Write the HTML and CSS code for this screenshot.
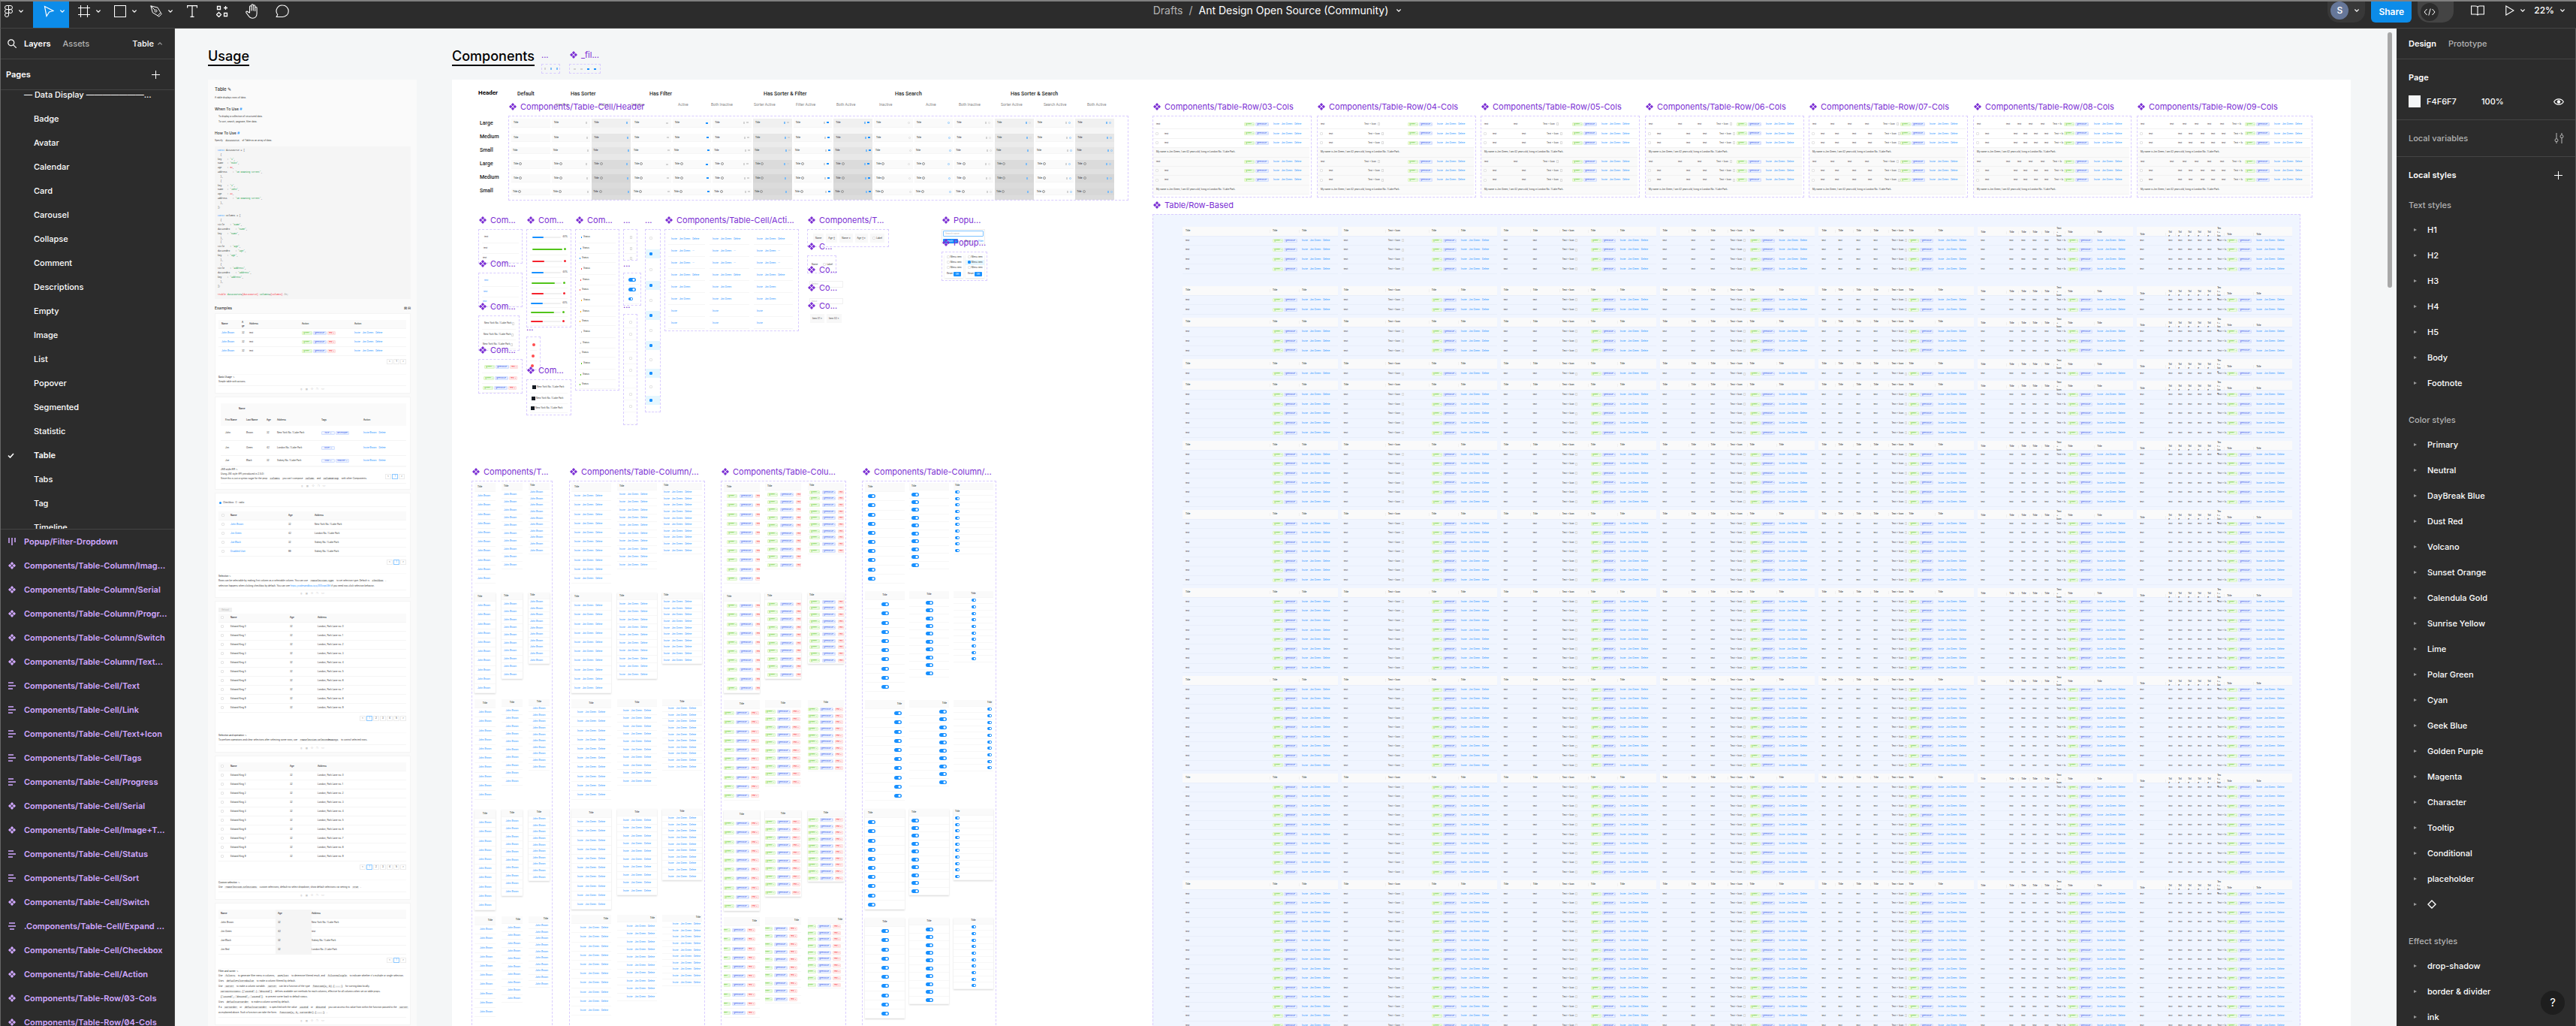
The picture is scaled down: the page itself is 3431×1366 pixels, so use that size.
FILE: index.html
```html
<!DOCTYPE html>
<html lang="en">
<head>
<meta charset="utf-8">
<title>Ant Design Open Source (Community)</title>
<link rel="stylesheet" href="styles.css">
</head>
<body>
<svg class="defs" aria-hidden="true">
  <symbol id="i-comp" viewBox="0 0 10 10"><path fill="currentColor" d="M5 0 7.2 2.2 5 4.4 2.8 2.2zM5 5.6 7.2 7.8 5 10 2.8 7.8zM2.2 2.8 4.4 5 2.2 7.2 0 5zM7.8 2.8 10 5 7.8 7.2 5.6 5z"/></symbol>
  <symbol id="i-lines" viewBox="0 0 10 10"><path fill="none" stroke="currentColor" stroke-width="1.5" d="M0 1h7M0 5h10M0 9h6"/></symbol>
  <symbol id="i-center" viewBox="0 0 10 10"><path fill="none" stroke="currentColor" stroke-width="1.5" d="M1 1h8M0 5h10M2 9h6"/></symbol>
  <symbol id="i-bars" viewBox="0 0 10 10"><path fill="none" stroke="currentColor" stroke-width="1.5" d="M1 0v7M5 0v10M9 0v6"/></symbol>
  <symbol id="i-chev" viewBox="0 0 6 4"><path fill="none" stroke="currentColor" stroke-width="1.1" d="M.4.5 3 3.2 5.6.5"/></symbol>
</svg>

<header class="toolbar">
  <div class="tools">
    <button class="tool tool--menu" aria-label="Main menu"><svg width="11" height="16" viewBox="0 0 11 16"><path fill="none" stroke="#fff" d="M5.5.5H3a2.5 2.5 0 0 0 0 5h2.5zM5.5.5H8a2.5 2.5 0 0 1 0 5H5.5zM5.5 5.5H3a2.5 2.5 0 0 0 0 5h2.5zM5.5 10.5H3a2.5 2.5 0 1 0 2.5 2.5z"/><circle cx="8" cy="8" r="2.5" fill="none" stroke="#fff"/></svg><svg class="chev"><use href="#i-chev"/></svg></button>
    <button class="tool tool--active" aria-label="Move"><svg width="14" height="16" viewBox="0 0 14 16"><path fill="none" stroke="#fff" stroke-width="1.2" d="M1.5 1.5 13 7.5 7.5 9 4 14.5z"/></svg><svg class="chev"><use href="#i-chev"/></svg></button>
    <button class="tool" aria-label="Frame"><svg width="16" height="16" viewBox="0 0 16 16"><path fill="none" stroke="#fff" stroke-width="1.1" d="M3.5 0v16M12.5 0v16M0 3.5h16M0 12.5h16"/></svg><svg class="chev"><use href="#i-chev"/></svg></button>
    <button class="tool" aria-label="Rectangle"><svg width="16" height="16" viewBox="0 0 16 16"><path fill="none" stroke="#fff" stroke-width="1.1" d="M.5.5h15v15H.5z"/></svg><svg class="chev"><use href="#i-chev"/></svg></button>
    <button class="tool" aria-label="Pen"><svg width="16" height="16" viewBox="0 0 16 16"><g fill="none" stroke="#fff"><path d="m.8.8 2.5 9 6.7 4 4-4-4-6.7zM.8.8 6.5 6.5M10 13.8l1.5 1.5 3.8-3.8-1.5-1.5"/><circle cx="7.5" cy="7.5" r="1.5"/></g></svg><svg class="chev"><use href="#i-chev"/></svg></button>
    <button class="tool tool--wide" aria-label="Text"><svg width="14" height="16" viewBox="0 0 14 16"><path fill="none" stroke="#fff" stroke-width="1.2" d="M.6 3.5V.6h12.8v2.9M7 .6v14.8M4.5 15.4h5"/></svg></button>
    <button class="tool tool--wide" aria-label="Resources"><svg width="16" height="16" viewBox="0 0 16 16"><path fill="none" stroke="#fff" stroke-width="1.3" d="M1.5 1.5h4v4h-4zM10.5 10.5h4v4h-4zM12.5 1v5M10 3.5h5M3.5 9.5l3 3-3 3-3-3z"/></svg></button>
    <button class="tool tool--wide" aria-label="Hand"><svg width="18" height="20" viewBox="0 0 18 20"><path fill="none" stroke="#fff" stroke-width="1.1" stroke-linejoin="round" d="M5.5 12V4a1.2 1.2 0 0 1 2.4 0v5V2a1.2 1.2 0 0 1 2.4 0v7V3a1.2 1.2 0 0 1 2.4 0v6.5V5.5a1.2 1.2 0 0 1 2.4 0V13c0 4-2.5 6.2-5.5 6.2-3.2 0-4.5-1.2-6-3.7L1 12c-.8-1.5 1-2.5 2.1-1.3z"/></svg></button>
    <button class="tool tool--wide" aria-label="Comment"><svg width="18" height="18" viewBox="0 0 18 18"><path fill="none" stroke="#fff" stroke-width="1.1" d="M9.5 1a7.7 7.7 0 1 1 0 15.5H1.2l1.6-3A7.7 7.7 0 0 1 9.5 1z"/></svg></button>
  </div>
  <div class="crumbs"><span class="crumbs__dim">Drafts</span><span class="crumbs__dim">/</span><span>Ant Design Open Source (Community)</span><svg class="chev"><use href="#i-chev"/></svg></div>
  <div class="actions">
    <button class="user" aria-label="Account"><span class="user__face">S</span><svg class="chev"><use href="#i-chev"/></svg></button>
    <button class="share">Share</button>
    <button class="dev" aria-label="Dev mode"><span class="dev__knob"><svg width="16" height="10" viewBox="0 0 16 10"><path fill="none" stroke="#fff" d="M4.5 1 1 5l3.5 4M11.5 1 15 5l-3.5 4M9.2.5 6.8 9.5"/></svg></span></button>
    <button class="plain plain--book" aria-label="Libraries"><svg width="18" height="14" viewBox="0 0 18 14"><path fill="none" stroke="#fff" stroke-width="1.1" d="M9 3C9 1.5 7.5 1 6 1H.6v11H6.5C8 12 9 12.3 9 13.5 9 12.3 10 12 11.5 12h5.9V1H12C10.5 1 9 1.5 9 3zv10"/></svg></button>
    <button class="plain" aria-label="Present"><svg width="12" height="14" viewBox="0 0 12 14"><path fill="none" stroke="#fff" stroke-width="1.1" d="M.8 1v12L11 7z"/></svg><svg class="chev"><use href="#i-chev"/></svg></button>
    <button class="plain zoom">22%<svg class="chev"><use href="#i-chev"/></svg></button>
  </div>
</header>

<main class="work">
  <aside class="side">
    <nav class="tabs">
      <svg class="tabs__find" width="12" height="12" viewBox="0 0 12 12"><g fill="none" stroke="#fff" stroke-width="1.2"><circle cx="4.8" cy="4.8" r="4"/><path d="m7.8 7.8 4 4"/></g></svg>
      <button class="tab tab--on">Layers</button><button class="tab">Assets</button>
      <button class="tab tab--page">Table<svg class="chev chev--up"><use href="#i-chev"/></svg></button>
    </nav>
    <div class="bar"><h2>Pages</h2><button class="add" aria-label="Add page"></button></div>
    <ul class="pages" id="pages"></ul>
    <ul class="layers" id="layers"></ul>
  </aside>

  <section class="canvas" id="canvas"><div class="scroll"></div></section>

  <aside class="props">
    <nav class="tabs tabs--props"><button class="tab tab--on">Design</button><button class="tab">Prototype</button></nav>
    <section class="prop prop--page">
      <h2>Page</h2>
      <div class="fill"><span class="fill__chip"></span><span class="fill__hex">F4F6F7</span><span>100%</span>
        <svg class="end" width="14" height="9" viewBox="0 0 14 9"><path fill="none" stroke="#fff" stroke-width="1.2" d="M.7 4.5C3.5-.3 10.5-.3 13.3 4.5 10.5 9.3 3.5 9.3.7 4.5z"/><circle cx="7" cy="4.5" r="2.2" fill="#fff"/></svg></div>
    </section>
    <section class="prop prop--line"><span class="dim">Local variables</span>
      <svg class="end" width="13" height="14" viewBox="0 0 13 14"><g fill="none" stroke="#bbb"><path d="M3 0v7.5M3 12v2M10 0v2.5M10 7v7"/><circle cx="3" cy="9.7" r="2"/><circle cx="10" cy="4.6" r="2"/></g></svg></section>
    <section class="prop prop--styles">
      <div class="prop__head"><h2>Local styles</h2><button class="add" aria-label="Add style"></button></div>
      <div id="styles"></div>
    </section>
    <button class="help" aria-label="Help">?</button>
  </aside>
</main>
<script src="app.js"></script>
</body>
</html>
```
FILE: styles.css
```css
* { box-sizing: border-box; }
body { margin: 0; height: 100vh; overflow: hidden; display: grid; grid-template-rows: 38px 1fr; background: #2c2c2c; color: #fff; font: 500 11px/16px Inter, "Liberation Sans", sans-serif; }
button { all: unset; box-sizing: border-box; cursor: default; }
h1, h2, ul, p { margin: 0; padding: 0; font: inherit; }
ul { list-style: none; }
.defs { position: absolute; width: 0; height: 0; }
.chev { width: 6px; height: 4px; flex: none; color: #fff; }
.chev--up { transform: rotate(180deg); color: #999; }

/* toolbar */
.toolbar { display: grid; grid-template-columns: 1fr auto 1fr; align-items: start; border-top: 2px solid #808080; border-bottom: 1px solid #444; border-left: 1px solid #666; position: relative; z-index: 2; }
.tools, .actions { display: flex; }
.tool { width: 48px; height: 35px; display: flex; align-items: center; justify-content: flex-end; gap: 8px; padding: 0 6px 10px 0; }
.tool--menu { width: 43px; padding-right: 13px; }
.tool--active { background: #0c8ce9; }
.tool--wide { justify-content: center; width: 40px; padding-right: 0; }
.crumbs { display: flex; align-items: center; gap: 8px; height: 24px; padding-right: 30px; font-size: 14px; font-weight: 400; }
.crumbs__dim { color: #b3b3b3; }
.crumbs .chev { margin-left: 3px; }
.actions { justify-content: flex-end; align-items: center; height: 28px; padding: 0 15px 0 0; }
.actions > * { height: 28px; }
.user { display: flex; align-items: center; gap: 8px; width: 50px; padding: 0 0 4px 4px; background: #383838; border-radius: 0 0 15px 15px; margin-right: 8px; }
.user__face { width: 24px; height: 24px; border-radius: 50%; background: #667799; text-align: center; line-height: 24px; font-size: 12px; }
.share { width: 54px; background: #0c8ce9; border-radius: 0 0 6px 6px; text-align: center; line-height: 24px; font-size: 12px; font-weight: 600; margin-right: 8px; }
.dev { width: 48px; background: #444; border-radius: 0 0 15px 15px; padding: 0 4px; }
.dev__knob { display: grid; place-items: center; width: 24px; height: 24px; border-radius: 50%; background: #2c2c2c; }
.plain { display: flex; align-items: center; gap: 8px; padding: 0 0 4px; margin-left: 18px; }
.plain--book { margin: 0 10px 0 23px; }
.zoom { font-size: 12px; margin-left: 12px; }

.work { display: grid; grid-template-columns: 233px minmax(0, 1fr) 239px; min-height: 0; }

/* left panel */
.side { border-left: 1px solid #666; border-right: 1px solid #444; display: flex; flex-direction: column; min-height: 0; overflow: hidden; }
.tabs { display: flex; align-items: center; flex: none; height: 41px; border-bottom: 1px solid #444; padding: 0 16px 0 9px; }
.tabs__find { margin-right: 10px; }
.tab { color: #b3b3b3; margin-right: 16px; }
.tab--on { color: #fff; font-weight: 600; }
.tab--page { margin: 0 0 0 auto; display: flex; align-items: center; gap: 5px; color: #fff; }
.bar { display: flex; justify-content: space-between; align-items: center; flex: none; height: 41px; border-bottom: 1px solid #444; padding: 0 19px 0 7px; }
h2 { font-weight: 600; }
.add { width: 11px; height: 11px; background: linear-gradient(#fff, #fff) center / 11px 1px no-repeat, linear-gradient(#fff, #fff) center / 1px 11px no-repeat; }
.pages { flex: 0 0 584px; overflow: hidden; }
.pages li { height: 32px; line-height: 32px; display: flex; padding-left: 44px; white-space: nowrap; }
.pages li:first-child { margin-top: -10px; padding-left: 31px; }
.pages .on { padding-left: 9px; font-weight: 600; align-items: center; gap: 26px; }
.layers { border-top: 1px solid #444; flex: 1; min-height: 0; overflow: hidden; }
.layers li { height: 32px; display: flex; align-items: center; gap: 11px; padding-left: 10px; color: #d1a8ff; font-weight: 600; font-feature-settings: "zero"; white-space: nowrap; }
.layers svg { width: 10px; height: 10px; flex: none; }

/* right panel */
.props { position: relative; border-right: 1px solid #555; min-height: 0; overflow: hidden; }
.tabs--props { padding-left: 16px; }
.prop { border-bottom: 1px solid #444; padding: 0 15px 0 16px; }
.prop--page { height: 81px; padding-top: 16px; }
.fill { display: flex; align-items: center; height: 16px; margin-top: 16px; }
.fill__chip { width: 16px; height: 16px; background: #f4f6f7; margin-right: 8px; }
.fill__hex { width: 73px; }
.end { margin-left: auto; }
.prop--line { display: flex; align-items: center; height: 49px; }
.dim { color: #b3b3b3; }
.prop--styles { border: 0; }
.prop__head { display: flex; align-items: center; justify-content: space-between; height: 48px; padding-right: 2px; }
.group { padding-bottom: 16px; }
.group h3 { margin: 0; height: 32px; font: inherit; line-height: 32px; color: #b3b3b3; }
.group li { height: 34px; display: flex; align-items: center; gap: 14px; padding-left: 7px; }
.group li::before { content: ""; border: 2px solid transparent; border-left: 4px solid #999; border-right: 0; }
.help { position: absolute; right: 14px; bottom: 15px; width: 32px; height: 32px; border-radius: 50%; background: #1e1e1e; text-align: center; line-height: 32px; font-size: 15px; font-weight: 400; }

/* canvas */
.canvas { position: relative; overflow: hidden; background: #f4f6f7; color: #333; font: 400 3px/5px Inter, "Liberation Sans", sans-serif; }
.canvas a { color: #1890ff; text-decoration: none; }
.scroll { position: absolute; z-index: 3; right: 6px; top: 5px; width: 6px; height: 340px; border-radius: 3px; background: #a8a8a8; }
.node { position: absolute; white-space: nowrap; }
.board { background: #fff; }
.board--usage { background: #fafafa; padding: 9px 8px 0 9px; }
.title { color: #000; font: 500 18px/22px Inter, sans-serif; border-bottom: 2px solid #000; }
.label { color: #7b2fd3; font: 400 11px/14px Inter, sans-serif; display: flex; align-items: center; gap: 5px; z-index: 2; }
.label svg { width: 10px; height: 10px; }
.frame { border: 1px dashed #d9ccff; overflow: hidden; }
.spec { color: #222; font: 500 7px/8px Roboto, sans-serif; }
.spec--head { font-size: 8px; font-weight: 700; color: #000; }
.spec--sub { font-size: 5px; font-weight: 400; color: #888; }

.tag { display: inline-block; border: 1px solid; border-radius: 1px; height: 5px; line-height: 3px; padding: 0 1px; margin-right: 1px; text-align: center; vertical-align: middle; overflow: hidden; }
.tag--green { width: 14px; color: #52c41a; background: #f6ffed; border-color: #dcf5c8; }
.tag--blue { width: 18px; color: #2f54eb; background: #f0f5ff; border-color: #d3e0ff; }
.tag--red { width: 11px; color: #f5222d; background: #fff1f0; border-color: #ffdcda; }
.acts { display: inline-flex; gap: 3px; }

/* data tables: every row is a grid, so cells follow the column starts */
table { display: flex; flex-direction: column; }
thead, tbody { display: contents; }
tr { display: grid; flex: 1; align-items: center; border-bottom: 1px solid #f2f2f2; min-height: 0; }
td, th { padding: 0; font-weight: 400; text-align: left; white-space: nowrap; min-width: 0; }
th { font-weight: 500; color: #222; position: relative; }
tr.head { background: #fafafa; }
tr.grey { background: #fafafa; border-color: #f2f2f2; }
.box { display: inline-block; width: 4px; height: 4px; border: 1px solid #e4e4e4; border-radius: 1px; background: #fff; vertical-align: middle; }
.box--on { background: #1890ff; border-color: #1890ff; }
.doc { display: inline-block; width: 3px; height: 4px; border: 1px solid #ddd; margin-left: 1px; vertical-align: middle; }

.rows { padding: 5px 2px 3px 0; display: flex; }
.rows table { flex: 1; }
.based { background: #f0f5ff; padding: 16px 10px 0 39px; }
.based__block { display: grid; grid-template-columns: repeat(7, 1fr); gap: 5px; margin-bottom: 4px; }
.based__block:first-child { margin-bottom: 16px; }
.based tr { border-color: #e8eefa; }
.based th + th::before { content: ""; position: absolute; left: -4px; top: 50%; margin-top: -2px; height: 4px; border-left: 1px solid #f0f0f0; }

/* header cells */
.heads { padding: 3px 0 0 3px; display: grid; grid-template-columns: repeat(15, 1fr); column-gap: 2px; padding-right: 18px; }
.heads__col { display: grid; grid-template-rows: 20px 18px 17px 19px 19px 16px; }
.heads__col--sorted { background: linear-gradient(#f5f5f5 20px, #ebebeb 20px 38px, #e8e8e8 38px 55px, #e0e0e0 55px 74px, #dbdbdb 74px 93px, #dcdcdc 93px); }
.hc { display: flex; align-items: center; justify-content: space-between; height: 12px; padding: 0 4px 0 3px; background: #fafafa; border-bottom: 1px solid #f5f5f5; color: #222; font-weight: 500; }
.hc--m { height: 11px; padding: 0 3px 0 3px; }
.hc--s { height: 9px; padding: 0 2px; }
.heads__col--sorted .hc { background: rgba(0,0,0,.02); border-color: transparent; }
.marks { display: flex; gap: 2px; }
.mk { width: 2px; height: 3px; background: #d4d4d4; }
.mk--filter { width: 3px; height: 2px; }
.mk--find { width: 3px; height: 3px; border: 1px solid #ddd; border-radius: 50%; background: none; }
.mk--on { background: #7dbdf8; }
.mk--filter.mk--on { background: #1890ff; }
.mk--find.mk--on { border-color: #8cc8ff; background: none; }
.q { display: inline-block; width: 4px; height: 4px; border: 1px solid #999; border-radius: 50%; vertical-align: middle; margin-left: 1px; }

/* cell variants */
.cells { padding: 2px 0 0; }
.cell { display: flex; align-items: center; height: 16px; margin: 0 4px; padding-left: 3px; border-bottom: 1px solid #f6f6f6; }
.cell--m { height: 14px; padding-left: 2px; }
.cell--s { height: 12px; padding-left: 1px; }
.meter { width: 40px; height: 2px; border-radius: 1px; background: #f0f0f0; margin-right: 2px; }
.meter i { display: block; height: 2px; border-radius: 1px; background: var(--c); }
.dot { width: 3px; height: 3px; border-radius: 50%; background: var(--c); flex: none; }
.dot--big { width: 4px; height: 4px; }
.st { width: 1px; height: 2px; background: var(--c); margin-right: 2px; }
.pic { width: 5px; height: 5px; background: #141a22; margin-right: 1px; }
.switch { display: inline-block; width: 10px; height: 5px; border-radius: 3px; background: radial-gradient(circle at 7px 50%, #fff 1px, transparent 2px) #1890ff; vertical-align: middle; }
.switch--s { width: 6px; height: 4px; background: radial-gradient(circle at 4px 50%, #fff 1px, transparent 1px) #1890ff; }
.cells--tight .cell { margin: 0 1px; padding-left: 6px; }
.cells--switch .cell { height: 13px; margin: 0 2px; padding-left: 4px; }
.exp { display: grid; place-items: center; height: 16px; border-bottom: 1px solid #f8f8f8; color: #666; }
.checks { display: flex; flex-direction: column; }
.chk { height: 21px; display: grid; align-items: center; }
.chk:nth-child(n+5) { height: 20px; }
.chk:nth-child(n+9) { height: 18px; }
.chk > span { display: flex; align-items: center; height: 12px; padding-left: 5px; }
.chk:nth-child(even) > span { background: #e6f7ff; }
.invites { padding: 4px 0 0 4px; display: grid; grid-template-columns: 55px 59px 58px; align-content: start; }
.invites > div { height: 16px; line-height: 16px; padding-left: 4px; margin-right: 6px; border-bottom: 1px solid #f6f6f6; }
.chips { display: flex; gap: 3px; align-items: center; padding-left: 7px; }
.chips > span { background: #f8f8f8; line-height: 12px; padding: 0 3px; }
.chips--plain { padding-left: 3px; }
.chips--plain > span { padding: 0 2px; background: #fff; }
.marks--set { gap: 6px; justify-content: center; align-items: center; }
.pop { background: #fff; border: 1px solid #eee; padding: 1px; }
.pop__field { height: 8px; border: 1px solid #7cc2ff; border-radius: 1px; color: #bbb; line-height: 6px; padding-left: 2px; margin-bottom: 3px; }
.pop__row { display: flex; justify-content: space-between; align-items: center; }
.btn { background: #1890ff; color: #fff; border-radius: 1px; line-height: 6px; padding: 0 3px; }
.btn--wide { width: 20px; }
.menus { display: grid; grid-template-columns: 1fr 1fr; gap: 3px; padding: 3px; }
.menu { box-shadow: 0 1px 2px #e4e4e4; }
.menu div { height: 7px; line-height: 7px; padding-left: 3px; }
.menu .sel { background: #e6f7ff; }
.menu .pop__row { padding: 0 3px; height: 9px; }
.line { border: 1px solid #f0f0f0; line-height: 6px; color: #bbb; padding-left: 2px; }

/* table columns */
.col { background: #fff; overflow: hidden; }
.col--card { box-shadow: 0 1px 2px #d8d8d8; }
.col td, .col th { padding: 0 4px; overflow: hidden; }
.col--m td, .col--m th { padding: 0 3px; }
.col--s td, .col--s th { padding: 0 2px; }
.col tr { border-color: #f7f7f7; }
.col--c td, .col--c th { display: flex; justify-content: center; }
.col--r td, .col--r th { display: flex; justify-content: flex-end; }
.col .tag { flex: none; margin-right: 2px; }

/* usage board */
.u-h1 { font-size: 6px; line-height: 8px; font-weight: 500; }
.u-h2 { font-size: 5px; line-height: 7px; font-weight: 500; margin-top: 9px; }
.u-p { margin-top: 5px; }
.u-p--in { margin-top: 2px; padding-left: 5px; }
.u-h2 + .u-p { margin-top: 4px; }
.k { background: #f0f0f0; font-family: "Liberation Mono", monospace; padding: 0 1px; margin: 0 2px; }
.code { display: flex; flex-direction: column; height: 203px; margin-top: 5px; padding: 3px 4px 2px; background: #f5f5f5; font-family: "Liberation Mono", monospace; white-space: pre; }
.code div { flex: 1; }
.code b { font-weight: 400; color: #1890ff; }
.code i { font-style: normal; color: #0a9a3c; }
.code u { text-decoration: none; color: #f5222d; }
.u-ex { display: flex; justify-content: space-between; font-size: 5px; line-height: 7px; font-weight: 500; margin: 9px 0 3px; }
.card { position: relative; display: flex; flex-direction: column; background: #fff; border: 1px solid #f4f4f4; margin-bottom: 4px; padding: 8px 5px 0 4px; }
.card tr { flex: none; height: 12px; border-color: #f5f5f5; }
.card--tall { padding-left: 7px; }
.card--tall tr { height: 20px; }
.card--tall tr.head { height: 15px; border-color: #fafafa; }
.card--tall tr:last-child { height: 14px; }
.pager { display: flex; justify-content: flex-end; gap: 1px; margin-top: 4px; }
.pager span { width: 8px; height: 7px; border: 1px solid #ececec; background: #fff; text-align: center; line-height: 5px; }
.pager .cur { border-color: #8cc8ff; color: #1890ff; }
.pager--over { position: absolute; right: 7px; bottom: 13px; }
.meta { margin-top: auto; border-top: 1px solid #fafafa; line-height: 6px; margin-bottom: 2px; }
.meta strong { font-weight: 500; }
.foot { display: flex; justify-content: center; gap: 4px; align-items: center; height: 10px; border-top: 1px solid #f5f5f5; color: #aaa; }
.foot i { font-style: normal; }
.off { display: inline-block; width: 18px; background: #f0f0f0; color: #bbb; text-align: center; line-height: 6px; margin-bottom: 2px; }
.radio { height: 10px; margin-bottom: 6px; border-bottom: 1px solid #f5f5f5; display: flex; gap: 2px; align-items: center; padding-left: 1px; }
.sorted tr td:nth-child(2), .sorted tr th:nth-child(2) { background: #f5f5f5; margin-left: -3px; padding-left: 3px; line-height: 11px; }
```
FILE: app.js
```js
const $ = id => document.getElementById(id);
const canvas = $('canvas');
const ORIGIN = { x: 233, y: 38 };
const icon = id => `<svg><use href="#${id}"/></svg>`;

/* ---------- panels ---------- */
const pages = ['— Data Display ———————...', 'Badge', 'Avatar', 'Calendar', 'Card', 'Carousel', 'Collapse', 'Comment', 'Descriptions', 'Empty', 'Image', 'List', 'Popover', 'Segmented', 'Statistic', 'Table', 'Tabs', 'Tag', 'Timeline'];
const check = '<svg width="9" height="7" viewBox="0 0 9 7"><path fill="none" stroke="#fff" stroke-width="1.6" d="M1 3.5 3.5 6 8 1"/></svg>';
$('pages').innerHTML = pages.map(p => p === 'Table' ? `<li class="on">${check}${p}</li>` : `<li>${p}</li>`).join('');

const C = 'Components/Table-';
const layers = [['bars', 'Popup/Filter-Dropdown'], ['comp', C + 'Column/Imag...'], ['comp', C + 'Column/Serial'], ['comp', C + 'Column/Progr...'], ['comp', C + 'Column/Switch'], ['comp', C + 'Column/Text...'], ['lines', C + 'Cell/Text'], ['lines', C + 'Cell/Link'], ['lines', C + 'Cell/Text+Icon'], ['lines', C + 'Cell/Tags'], ['lines', C + 'Cell/Progress'], ['comp', C + 'Cell/Serial'], ['comp', C + 'Cell/Image+T...'], ['lines', C + 'Cell/Status'], ['lines', C + 'Cell/Sort'], ['comp', C + 'Cell/Switch'], ['center', '.' + C + 'Cell/Expand ...'], ['comp', C + 'Cell/Checkbox'], ['comp', C + 'Cell/Action'], ['comp', C + 'Row/03-Cols'], ['comp', C + 'Row/04-Cols']];
$('layers').innerHTML = layers.map(([i, t]) => `<li>${icon('i-' + i)}${t}</li>`).join('');

const styles = {
  'Text styles': ['H1', 'H2', 'H3', 'H4', 'H5', 'Body', 'Footnote'],
  'Color styles': ['Primary', 'Neutral', 'DayBreak Blue', 'Dust Red', 'Volcano', 'Sunset Orange', 'Calendula Gold', 'Sunrise Yellow', 'Lime', 'Polar Green', 'Cyan', 'Geek Blue', 'Golden Purple', 'Magenta', 'Character', 'Tooltip', 'Conditional', 'placeholder', '<svg width="12" height="12" viewBox="0 0 12 12"><path fill="none" stroke="#fff" stroke-width="1.4" d="m6 1 5 5-5 5-5-5z"/></svg>'],
  'Effect styles': ['drop-shadow', 'border &amp; divider', 'ink']
};
$('styles').innerHTML = Object.entries(styles).map(([h, l]) => `<div class="group"><h3>${h}</h3><ul>${l.map(t => `<li>${t}</li>`).join('')}</ul></div>`).join('');

/* ---------- canvas helpers ---------- */
const out = [];
function node(cls, x, y, w, h, html = '') {
  const size = (w ? `width:${w}px;` : '') + (h ? `height:${h}px;` : '');
  out.push(`<div class="node ${cls}" style="left:${x - ORIGIN.x}px;top:${y - ORIGIN.y}px;${size}">${html}</div>`);
}
function frame(label, x, y, w, h, cls, html) {
  node('frame ' + cls, x, y, w, h, html);
  if (label) node('label', label === '...' ? x : x + 1, y - 19, 0, 0, (label === '...' ? '' : icon('i-comp')) + label);
}
function row(starts, cells, cls = '', tag = 'td') {
  const tpl = starts.map((s, i) => i < starts.length - 1 ? starts[i + 1] - s + 'px' : '1fr').join(' ');
  return `<tr class="${cls}" style="padding-left:${starts[0]}px;grid-template-columns:${tpl}">${cells.map(c => `<${tag}>${c}</${tag}>`).join('')}</tr>`;
}
const times = (n, f) => Array.from({ length: n }, (_, i) => f(i)).join('');
const link = t => `<a href="#">${t}</a>`;
const acts = `<span class="acts">${link('Invite')}${link('Jim Green')}${link('Delete')}</span>`;
const green = '<span class="tag tag--green">green ×</span>';
const blue = '<span class="tag tag--blue">geekblue ×</span>';
const red = '<span class="tag tag--red">red ×</span>';
const doc = '<span class="doc"></span>';
const box = on => `<span class="box${on ? ' box--on' : ''}"></span>`;

/* ---------- boards ---------- */
node('title', 277, 64, 0, 0, 'Usage');
node('title', 602, 64, 0, 0, 'Components');
node('board', 602, 106, 2529, 1300);

/* small icon sets beside the heading */
frame('...', 721, 85, 25, 13, 'marks marks--set', '<i class="mk"></i><i class="mk mk--on"></i><i class="mk mk--on"></i>');
frame('_fil...', 758, 85, 42, 13, 'marks marks--set', '<i class="mk mk--filter"></i><i class="mk mk--filter"></i><i class="mk mk--filter mk--on"></i><i class="mk mk--filter mk--on"></i>');

/* header cell matrix */
const spec = (t, x, y, m = '') => node('spec' + m, x, y - 4, 0, 0, t);
spec('Header', 637, 124, ' spec--head');
[['Default', 689], ['Has Sorter', 760], ['Has Filter', 865], ['Has Sorter &amp; Filter', 1017], ['Has Search', 1192], ['Has Sorter &amp; Search', 1346]].forEach(([t, x]) => spec(t, x, 125));
[['Inactive', 740], ['Active', 797], ['Inactive', 841], ['Active', 903], ['Both Inactive', 947], ['Sorter Active', 1004], ['Filter Active', 1060], ['Both Active', 1114], ['Inactive', 1171], ['Active', 1233], ['Both Inactive', 1277], ['Sorter Active', 1333], ['Search Active', 1390], ['Both Active', 1448]].forEach(([t, x]) => spec(t, x, 139, ' spec--sub'));
['Large', 'Medium', 'Small', 'Large', 'Medium', 'Small'].forEach((t, i) => spec(t, 639, 164 + 18 * i));
const marks = ['', 's', 'S', 'f', 'F', 'sf', 'Sf', 'sF', 'SF', 'q', 'Q', 'sq', 'Sq', 'sQ', 'SQ'];
const mark = c => `<i class="mk ${{ s: '', f: 'mk--filter', q: 'mk--find' }[c.toLowerCase()]} ${c < 'a' ? 'mk--on' : ''}"></i>`;
frame('Components/Table-Cell/Header', 677, 154, 826, 113, 'heads', marks.map(m =>
  `<div class="heads__col${m[0] === 'S' ? ' heads__col--sorted' : ''}">${times(6, i =>
    `<div class="hc ${['', 'hc--m', 'hc--s'][i % 3]}"><span>Title${i > 2 ? '<i class="q"></i>' : ''}</span><span class="marks">${[...m].map(mark).join('')}</span></div>`)}</div>`).join(''));

/* cell variants, each in large, medium and small */
const sizes = ['', 'cell--m', 'cell--s'];
const lms = html => sizes.map(s => `<div class="cell ${s}">${html}</div>`).join('');
frame('Com...', 637, 305, 59, 46, 'cells', lms('text'));
frame('Com...', 637, 363, 59, 46, 'cells', lms(link('text')));
frame('Com...', 637, 420, 55, 47, 'cells', lms('New York No. 1 Lake Park ' + doc));
frame('Com...', 637, 478, 59, 46, 'cells', lms(green + blue + red));
const meters = [['#1890ff', 40, '40%'], ['#52c41a', 100, ''], ['#f5222d', 40, '']];
frame('Com...', 701, 305, 60, 131, 'cells', sizes.map((s, i) => meters.map(([c, p, t]) =>
  `<div class="cell ${s}"><span class="meter"><i style="--c:${c};width:${i && p === 100 ? 78 : p}%"></i></span>${t || `<i class="dot" style="--c:${c}"></i>`}</div>`).join('')).join(''));
frame('...', 701, 448, 19, 45, 'cells', lms('<i class="dot dot--big" style="--c:#ff4d4f"></i>'));
frame('Com...', 701, 505, 60, 48, 'cells', lms('<i class="pic"></i>New York No. 1 Lake Park'));
frame('Com...', 766, 305, 59, 215, 'cells', ['#1890ff', '#ff4d4f', '#faad14', '#bfbfbf', '#52c41a'].map(c => lms(`<i class="st" style="--c:${c}"></i>Status`)).join(''));
frame('...', 830, 305, 19, 42, 'cells cells--tight', lms(doc));
frame('...', 830, 363, 24, 44, 'cells cells--switch', times(3, i => `<div class="cell"><i class="switch ${i > 1 ? 'switch--s' : ''}"></i></div>`));
frame('...', 830, 418, 19, 148, 'cells', ['+', '−', '', '+', '−', '', '+', '−', ''].map(t => `<div class="exp">${t && box(0)}</div>`).join(''));
frame('...', 859, 305, 21, 244, 'checks', times(12, i => `<div class="chk"><span>${box(i % 2)}</span></div>`));
const inv = [['Invite', 'Jim Green', 'Delete'], ['Invite', 'Jim Green', '···'], ['Invite', 'Jim Green', '···'], ['Invite', 'Jim Green', 'Delete'], ['Invite', 'Jim Green'], ['Invite', 'Jim Green'], ['Invite'], ['Invite']];
frame('Components/Table-Cell/Acti...', 885, 305, 179, 136, 'invites', inv.map(r => times(3, () => `<div><span class="acts">${r.map(link).join('')}</span></div>`)).join(''));
frame('Components/T...', 1075, 305, 109, 24, 'chips', ['Name', 'Age ↕', 'Name ▾', 'Age ↕ ▾', box(0) + ' Label'].map(t => `<span>${t}</span>`).join(''));
frame('C...', 1075, 340, 39, 24, 'chips chips--plain', `<span>Name</span><span>${box(0)} Label</span>`);
[370, 394, 418].forEach(y => node('label', 1076, y - 18, 0, 0, icon('i-comp') + 'Co...'));
node('line', 1078, 374, 45, 9, 'Select');
node('line', 1078, 397, 45, 8, 'Input');
node('chips', 1072, 418, 60, 12, '<span>Item 01 ×</span><span>Item 02 ×</span>');

frame('Popu...', 1254, 305, 58, 20, 'pop', `<div class="pop__field">Search name</div><div class="pop__row"><span class="btn btn--wide">Search</span><span>Reset</span>${link('Filter')}</div>`);
const menu = on => `<div class="menu"><div>${box(0)} Menu item</div><div class="${on ? 'sel' : ''}">${box(on)} Menu item</div><div>${box(0)} Menu item</div><div class="pop__row"><span>Reset</span><span class="btn">OK</span></div></div>`;
frame('Popup...', 1254, 335, 61, 39, 'menus', menu(0) + menu(1));

/* table row components; starts for plain rows, then for rows with an expander */
const rowFrames = [
  ['03', 1535, 212, [4, 121, 160], [3, 15, 121, 160]],
  ['04', 1754, 212, [4, 62, 120, 159], [3, 15, 67, 120, 159]],
  ['05', 1972, 212, [4, 43, 82, 121, 160], [3, 15, 54, 87, 121, 160]],
  ['06', 2191, 212, [4, 43, 69, 94, 121, 160], [3, 15, 54, 76, 98, 121, 160]],
  ['07', 2409, 212, [4, 28, 51, 74, 98, 121, 160], [3, 15, 34, 57, 78, 100, 121, 160]],
  ['08', 2628, 211, [4, 43, 58, 73, 89, 105, 120, 160], [3, 15, 53, 66, 80, 94, 107, 120, 160]],
  ['09', 2846, 234, [4, 43, 60, 76, 93, 110, 126, 143, 182], [3, 15, 54, 68, 84, 98, 112, 128, 143, 182]]
];
const bodyCells = n => [...Array(Math.max(1, n - 3)).fill('text'), ...(n > 3 ? [n < 8 ? 'Text + Icon ' + doc : 'Text + Ic'] : []), green + blue, acts];
rowFrames.forEach(([name, x, w, plain, open]) => {
  const cells = bodyCells(+name);
  const half = g => row(plain, cells, g) + row(open, [box(0), ...cells], g) + row(open, [box(0), ...cells], g) + row([4], ['My name is Jim Green, I am 42 years old, living in London No. 1 Lake Park.'], 'grey');
  frame(`Components/Table-Row/${name}-Cols`, x, 154, w, 109, 'rows', `<table>${half('')}${half('grey')}</table>`);
});

/* row based tables: one block per row count, seven widths in each */
const based = [
  [4, 120, 159], [3, 62, 120, 159], [4, 43, 82, 120, 159], [4, 42, 68, 94, 120, 159],
  [4, 26, 50, 73, 97, 120, 159], [4, 42, 58, 73, 89, 105, 120, 159], [4, 42, 55, 68, 81, 94, 107, 120, 159]
];
const blocks = [[4, 63], [2, 38], [3, 51], [1, 25], [5, 76], [6, 88], [7, 100], [8, 113], [9, 126], [10, 138], [15, 200]];
const heads = n => [n === 9 ? ['Title', ...Array(5).fill('Titl<br>e'), 'Tex<br>t +<br>Ico<br>n'] : [...Array(Math.max(1, n - 3)).fill('Title'), ...(n > 3 ? [n === 8 ? 'Text<br>+<br>Icon' : 'Text + Icon'] : [])], 'Title', 'Title'].flat();
frame('Table/Row-Based', 1535, 285, 1529, 1100, 'based', blocks.map(([n, h]) =>
  `<div class="based__block" style="height:${h}px">${based.map((s, i) => `<table>${row(s, heads(i + 3), 'head', 'th')}${times(n, () => row(s, bodyCells(i + 3)))}</table>`).join('')}</div>`).join(''));

/* column components */
const columns = [
  ['Components/T...', 628, 108, [632, 668, 704], 28, [643, 789, 931, 1078, 1220], () => link('John Brown')],
  ['Components/Table-Column/...', 758, 181, [761, 822, 882], 53, [643, 789, 931, 1077, 1218], () => acts],
  ['Components/Table-Colu...', 960, 167, [964, 1019, 1076], 48, [643, 789, 932, 1079, 1221], () => green + ' ' + blue + ' ' + red],
  ['Components/Table-Column/...', 1148, 179, [1152, 1211, 1270], 53, [643, 787, 932, 1077, 1222], s => `<i class="switch ${s > 1 ? 'switch--s' : ''}"></i>`]
];
columns.forEach(([label, x, w, xs, cw, tops, cell], k) => {
  frame(label, x, 640, w, 760, '', '');
  tops.forEach((top, b) => xs.forEach((cx, s) => {
    const align = k < 3 ? ['', '', 'c', 'c', 'r'][b] : ['', 'c', 'r', '', 'c'][b];
    const card = k < 3 ? b % 2 : b > 2;
    node(`col ${['', 'col--m', 'col--s'][s]} ${align && 'col--' + align} ${card ? 'col--card' : ''}`, cx, top, cw, 0,
      `<table style="height:${[134, 115, 95][s]}px">${row([0], ['Title'], 'head', 'th')}${times(10, () => row([0], [cell(s)]))}</table>`);
  }));
});

/* ---------- usage board ---------- */
const src = `<b>const</b> dataSource = [
  {
key    : <i>'1'</i>,
name   : <i>'Mike'</i>,
age    : <u>32</u>,
address    : <i>'10 Downing Street'</i>,
  },
  {
key    : <i>'2'</i>,
name   : <i>'John'</i>,
age    : <u>42</u>,
address    : <i>'10 Downing Street'</i>,
  },
];

<b>const</b> columns = [
  {
title    : <i>'Name'</i>,
dataIndex    : <i>'name'</i>,
key    : <i>'name'</i>,
  },
  {
title    : <i>'Age'</i>,
dataIndex    : <i>'age'</i>,
key    : <i>'age'</i>,
  },
  {
title    : <i>'Address'</i>,
dataIndex    : <i>'address'</i>,
key    : <i>'address'</i>,
  },
];

<u>&lt;Table</u> <i>dataSource</i>=<u>{dataSource}</u> <i>columns</i>=<u>{columns}</u> /&gt;;`;
const code = src.split('\n').map(l => `<div>${l || ' '}</div>`).join('');
const pager = (labels, cur, cls = '') => `<div class="pager ${cls}">${labels.map(l => `<span class="${l === cur ? 'cur' : ''}">${l}</span>`).join('')}</div>`;
const k = t => `<span class="k">${t}</span>`;
const card = (h, cls, body, title, lines) => `<div class="card ${cls}" style="height:${h}px">${body}<div class="meta"><strong>${title} ✎</strong>${lines.map(l => `<p>${l}</p>`).join('')}</div><div class="foot"><i>◎</i><i>▤</i><i>◇</i><i>❐</i><i>&lt;&gt;</i></div></div>`;
const park = 'New York No. 1 Lake Park';
const king = first => `<table>${row([3, 16, 95, 132], [first, 'Name', 'Age', 'Address'], 'head', 'th')}${times(10, i => row([3, 16, 95, 132], [box(0), 'Edward King ' + i, '32', 'London, Park Lane no. ' + i]))}</table>`;
const five = ['&lt;', '1', '2', '3', '4', '5', '&gt;'];
const c1 = [4, 31, 41, 111, 181], c2 = [6, 34, 61, 75, 134, 190], c3 = [4, 16, 93, 128], c6 = [3, 79, 124];
const dev = t => `<span class="tag tag--blue">${t} ×</span>`;
const inv2 = `<span class="acts">${link('Invite Brown')}${link('Delete')}</span>`;
const people = [['John Brown', '32', park], ['Jim Green', '42', 'London No. 1 Lake Park'], ['Joe Black', '32', 'Sidney No. 1 Lake Park'], ['Disabled User', '99', 'Sidney No. 1 Lake Park']];

node('board--usage', 277, 106, 278, 1300, `
<h1 class="u-h1">Table ✎</h1><p class="u-p">A table displays rows of data.</p>
<h2 class="u-h2">When To Use ${link('#')}</h2><p class="u-p u-p--in">To display a collection of structured data.</p><p class="u-p u-p--in">To sort, search, paginate, filter data.</p>
<h2 class="u-h2">How To Use ${link('#')}</h2><p class="u-p">Specify ${k('dataSource')} of Table as an array of data.</p>
<div class="code">${code}</div>
<div class="u-ex"><span>Examples</span><span>⊠ ⊟</span></div>
${card(107, '', `<table>${row(c1, ['Name', 'A<br>ge', 'Address', 'Action', 'Action'], 'head', 'th')}${times(3, () => row(c1, [link('John Brown'), '32', 'text', green + blue + red, acts]))}</table>${pager(['&lt;', '1', '&gt;'])}`, 'Basic Usage', ['Simple table with actions.'])}
${card(124, 'card--tall', `<table>${row([24], ['Name'], 'head', 'th')}${row(c2, ['First Name', 'Last Name', 'Age', 'Address', 'Tags', 'Action'], 'head', 'th')}${row(c2, ['John', 'Brown', '32', park, dev('nice') + dev('developer'), inv2])}${row(c2, ['Jim', 'Green', '42', 'London No. 1 Lake Park', dev('loser'), inv2])}${row(c2, ['Joe', 'Black', '32', 'Sidney No. 1 Lake Park', dev('cool') + dev('teacher'), inv2])}</table>${pager(['&lt;', '1', '&gt;'], '1', 'pager--over')}`, 'JSX style API', ['Using JSX style API (introduced in 2.5.0)', `Since this is just a syntax sugar for the prop ${k('columns')} you can't compose ${k('Column')} and ${k('ColumnGroup')} with other Components.`])}
${card(140, '', `<div class="radio"><i class="dot" style="--c:#1890ff"></i>Checkbox <span>○</span> radio</div><table>${row(c3, [box(0), 'Name', 'Age', 'Address'], 'head', 'th')}${people.map(([n, a, d]) => row(c3, [box(0), link(n), a, d])).join('')}</table>${pager(['&lt;', '1', '&gt;'], '1')}`, 'Selection', [`Rows can be selectable by making first column as a selectable column. You can use ${k('rowSelection.type')} to set selection type. Default is ${k('checkbox')}.`, `selection happens when clicking checkbox by default. You can see ${link('https://codesandbox.io/s/000vqw38rl')} if you need row-click selection behavior.`])}
${card(202, '', `<div><span class="off">Reload</span></div>${king(box(0))}${pager(five, '1')}`, 'Selection and operation', [`To perform operations and clear selections after selecting some rows, use ${k('rowSelection.selectedRowKeys')} to control selected rows.`])}
${card(192, '', `${king(box(0))}${pager(five, '1')}`, 'Custom selection', [`Use ${k('rowSelection.selections')} custom selections, default no select dropdown, show default selections via setting to ${k('true')}.`])}
${card(163, '', `<table class="sorted">${row(c6, ['Name', 'Age', 'Address'], 'head', 'th')}${row(c6, ['John Brown', '32', park])}${row(c6, ['Jim Green', '42', 'text'])}${row(c6, ['Joe Black', '32', 'Sidney No. 1 Lake Park'])}${row(c6, ['Jim Red', '32', 'London No. 2 Lake Park'])}</table>${pager(['&lt;', '1', '&gt;'], '1')}`, 'Filter and sorter', [
  `Use ${k('filters')} to generate filter menu in columns, ${k('onFilter')} to determine filtered result, and ${k('filterMultiple')} to indicate whether it's multiple or single selection.`,
  `Uses ${k('defaultFilteredValue')} to make a column filtered by default.`,
  `Use ${k('sorter')} to make a column sortable. ${k('sorter')} can be a function of the type ${k('function(a, b) { ... }')} for sorting data locally.`,
  `${k("sortDirections: ['ascend' | 'descend']")} defines available sort methods for each columns, effective for all columns when set on table props.`,
  `${k("['ascend', 'descend', 'ascend']")} to prevent sorter back to default status.`,
  `Uses ${k('defaultSortOrder')} to make a column sorted by default.`,
  `If a ${k('sortOrder')} or ${k('defaultSortOrder')} is specified with the value ${k('ascend')} or ${k('descend')} you can access this value from within the function passed to the ${k('sorter')}`,
  `as explained above. Such a function can take the form: ${k('function(a, b, sortOrder) { ... }')}.`])}
`);

canvas.insertAdjacentHTML('afterbegin', out.join(''));
```
